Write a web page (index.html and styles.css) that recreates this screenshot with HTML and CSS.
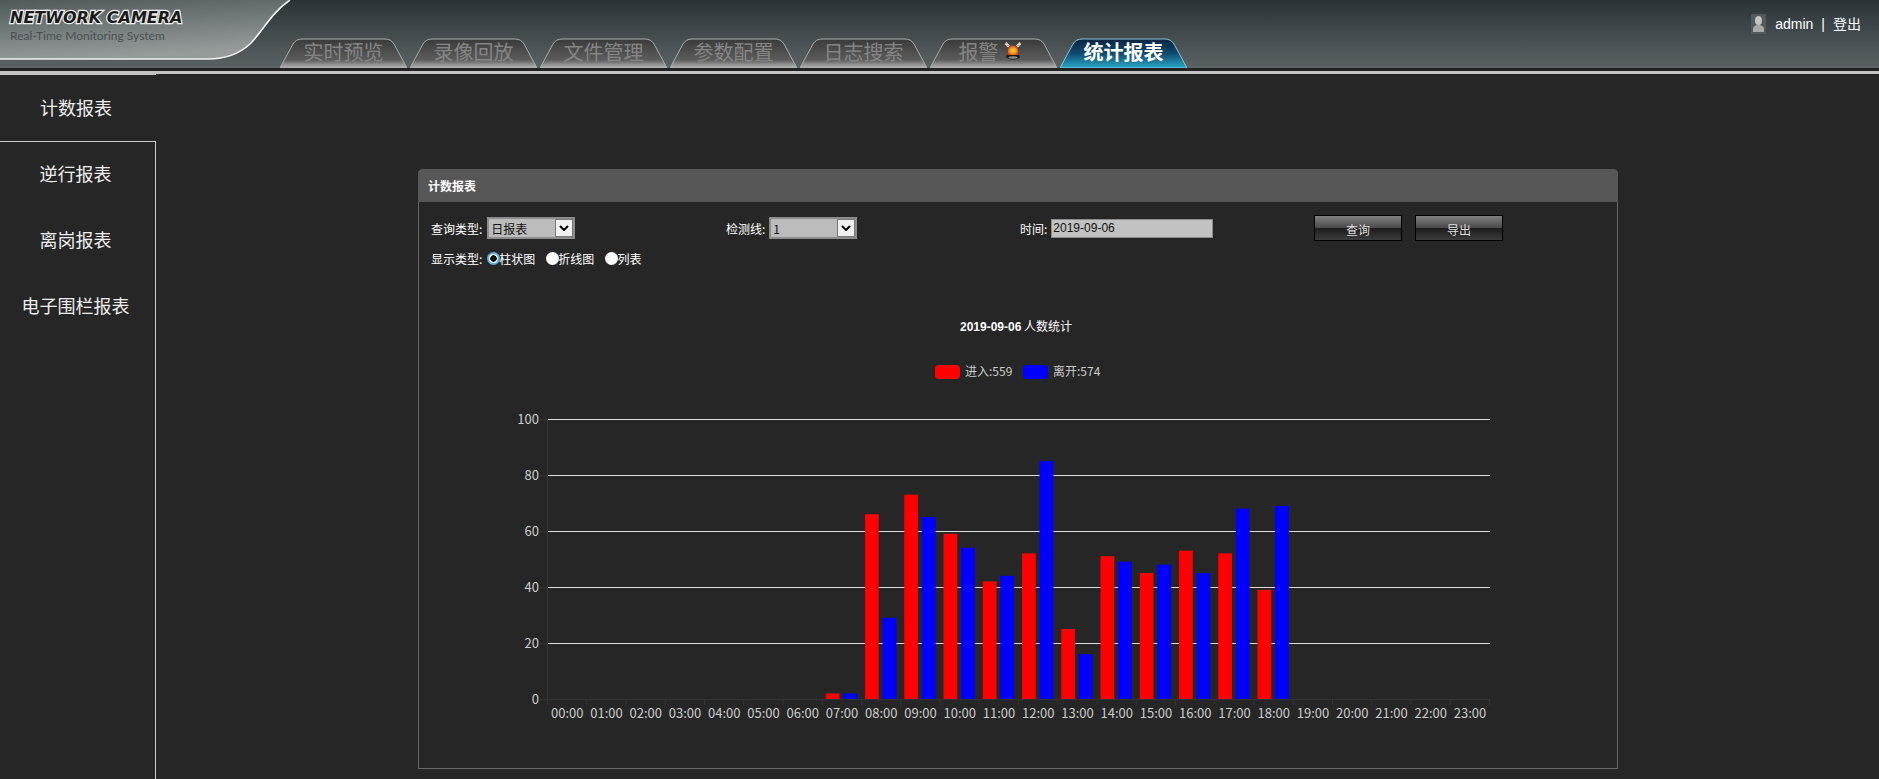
FILE: index.html
```html
<!DOCTYPE html>
<html lang="zh-CN">
<head>
    <meta charset="UTF-8">
    <meta name="viewport" content="width=device-width, initial-scale=1.0">
    <title>Network Camera</title>
    <link rel="stylesheet" href="styles.css">
</head>
<body>
    <div class="header">
        <svg class="logo-bg" width="300" height="68" viewBox="0 0 300 68">
            <defs>
                <linearGradient id="logoGrad" x1="0" y1="0" x2="0.3" y2="1">
                    <stop offset="0" stop-color="#50585a"/>
                    <stop offset="1" stop-color="#969c9a"/>
                </linearGradient>
            </defs>
            <path d="M0 0H290C272 12 262 32 250 44C238 55 224 59 208 59H0Z" fill="url(#logoGrad)"/>
            <path d="M0 59H208C224 59 238 55 250 44C262 32 272 12 290 0" fill="none" stroke="#f2f2f2" stroke-width="1.6"/>
        </svg>
        <div class="logo">
            <div class="logo-title">NETWORK CAMERA</div>
            <div class="logo-sub">Real-Time Monitoring System</div>
        </div>

        <svg width="0" height="0" class="defs">
            <defs>
                <linearGradient id="tabGrad" x1="0" y1="0" x2="0" y2="1">
                    <stop offset="0" stop-color="#3a3a3a"/>
                    <stop offset="0.72" stop-color="#5c5c5c"/>
                    <stop offset="1" stop-color="#b8b8b8"/>
                </linearGradient>
                <linearGradient id="tabActiveGrad" x1="0" y1="0" x2="0" y2="1">
                    <stop offset="0" stop-color="#0b2440"/>
                    <stop offset="0.5" stop-color="#0f4a70"/>
                    <stop offset="1" stop-color="#2aa8c6"/>
                </linearGradient>
                <radialGradient id="alarmGrad" cx="0.5" cy="0.55" r="0.55">
                    <stop offset="0" stop-color="#ffd83a"/>
                    <stop offset="0.55" stop-color="#ff9a1e"/>
                    <stop offset="1" stop-color="#e8380e"/>
                </radialGradient>
                <path id="tabShape" d="M0 30L13 6Q16 1 22 1H105Q111 1 114 6L127 30Z"/>
            </defs>
        </svg>

        <div class="tabs">
            <div class="tab">
                <svg class="tab-bg" width="127" height="30"><use href="#tabShape" fill="url(#tabGrad)" stroke="#a9adad"/></svg>
                <span>实时预览</span>
            </div>
            <div class="tab">
                <svg class="tab-bg" width="127" height="30"><use href="#tabShape" fill="url(#tabGrad)" stroke="#a9adad"/></svg>
                <span>录像回放</span>
            </div>
            <div class="tab">
                <svg class="tab-bg" width="127" height="30"><use href="#tabShape" fill="url(#tabGrad)" stroke="#a9adad"/></svg>
                <span>文件管理</span>
            </div>
            <div class="tab">
                <svg class="tab-bg" width="127" height="30"><use href="#tabShape" fill="url(#tabGrad)" stroke="#a9adad"/></svg>
                <span>参数配置</span>
            </div>
            <div class="tab">
                <svg class="tab-bg" width="127" height="30"><use href="#tabShape" fill="url(#tabGrad)" stroke="#a9adad"/></svg>
                <span>日志搜索</span>
            </div>
            <div class="tab tab-alarm">
                <svg class="tab-bg" width="127" height="30"><use href="#tabShape" fill="url(#tabGrad)" stroke="#a9adad"/></svg>
                <span>报警</span>
                <svg class="alarm" width="18" height="18" viewBox="0 0 18 18">
                    <path d="M1.5 1L5 4.5M16.5 1L13 4.5" stroke="#f0ddd0" stroke-width="2.6" fill="none"/>
                    <path d="M1.5 1L5 4.5M16.5 1L13 4.5" stroke="#5a3a30" stroke-width="1" stroke-dasharray="1 2" fill="none"/>
                    <ellipse cx="9" cy="14.5" rx="7" ry="3" fill="#1c1c1c"/>
                    <ellipse cx="9" cy="15.5" rx="4.5" ry="1.2" fill="#8a8a8a"/>
                    <path d="M4 13V8.5a5 5 0 0 1 10 0V13Z" fill="url(#alarmGrad)"/>
                </svg>
            </div>
            <div class="tab tab-active">
                <svg class="tab-bg" width="127" height="30"><use href="#tabShape" fill="url(#tabActiveGrad)" stroke="#8fc4d6"/></svg>
                <span>统计报表</span>
            </div>
        </div>

        <div class="user">
            <svg class="user-icon" width="15" height="20" viewBox="0 0 15 20">
                <rect width="15" height="20" fill="#53585a"/>
                <ellipse cx="7.5" cy="6.5" rx="3.5" ry="4.5" fill="#c4c4c4"/>
                <path d="M2 18V15Q2 12 6 11H9Q13 12 13 15V18Z" fill="#a8a8a8"/>
            </svg>
            <span>admin</span>
            <span class="user-sep">|</span>
            <span>登出</span>
        </div>
    </div>
    <div class="header-line"></div>

    <div class="main">
        <div class="sidebar">
            <div class="side-item side-active">计数报表</div>
            <div class="side-item">逆行报表</div>
            <div class="side-item">离岗报表</div>
            <div class="side-item">电子围栏报表</div>
        </div>

        <div class="content">
            <div class="panel">
                <div class="panel-title">计数报表</div>
                <div class="form-row">
                    <div class="field">
                        <label>查询类型:</label>
                        <div class="select"><span>日报表</span><i class="select-arrow"><svg width="10" height="6" viewBox="0 0 10 6"><path d="M1 1L5 5L9 1" fill="none" stroke="#000" stroke-width="2"/></svg></i></div>
                    </div>
                    <div class="field field-line">
                        <label>检测线:</label>
                        <div class="select"><span>1</span><i class="select-arrow"><svg width="10" height="6" viewBox="0 0 10 6"><path d="M1 1L5 5L9 1" fill="none" stroke="#000" stroke-width="2"/></svg></i></div>
                    </div>
                    <div class="field field-date">
                        <label>时间:</label>
                        <input class="date-input" type="text" value="2019-09-06">
                    </div>
                    <div class="field field-buttons">
                        <button>查询</button>
                        <button>导出</button>
                    </div>
                </div>
                <div class="form-row form-row-radio">
                    <label class="radio-title">显示类型:</label>
                    <label class="radio"><input type="radio" name="show" checked>柱状图</label>
                    <label class="radio"><input type="radio" name="show">折线图</label>
                    <label class="radio"><input type="radio" name="show">列表</label>
                </div>

                <!-- viewBox uses page coordinates, so numbers read the same as the screenshot -->
                <svg class="chart" width="1197" height="480" viewBox="419 280 1197 480">
                    <text class="chart-title" x="1016" y="331" text-anchor="middle"><tspan class="chart-date">2019-09-06</tspan> 人数统计</text>

                    <rect x="935" y="365" width="25" height="14" rx="4" fill="#f00"/>
                    <text class="chart-label legend-text" x="965" y="376">进入:559</text>
                    <rect x="1023" y="365" width="25" height="14" rx="4" fill="#00f"/>
                    <text class="chart-label legend-text" x="1053" y="376">离开:574</text>

                    <g class="grid">
                        <line x1="547.6" x2="1490" y1="419.5" y2="419.5"/>
                        <line x1="547.6" x2="1490" y1="475.5" y2="475.5"/>
                        <line x1="547.6" x2="1490" y1="531.5" y2="531.5"/>
                        <line x1="547.6" x2="1490" y1="587.5" y2="587.5"/>
                        <line x1="547.6" x2="1490" y1="643.5" y2="643.5"/>
                    </g>
                    <g class="axis">
                        <line x1="547.5" x2="547.5" y1="419.5" y2="699.5"/>
                        <line x1="547.6" x2="1490" y1="699.5" y2="699.5"/>
                        <line x1="540" x2="547" y1="419.5" y2="419.5"/>
                        <line x1="540" x2="547" y1="475.5" y2="475.5"/>
                        <line x1="540" x2="547" y1="531.5" y2="531.5"/>
                        <line x1="540" x2="547" y1="587.5" y2="587.5"/>
                        <line x1="540" x2="547" y1="643.5" y2="643.5"/>
                        <line x1="540" x2="547" y1="699.5" y2="699.5"/>
                        <line class="ticks" x1="547" x2="1491" y1="702.5" y2="702.5"/>
                    </g>

                    <g class="chart-label" text-anchor="end">
                        <text x="539" y="424">100</text>
                        <text x="539" y="480">80</text>
                        <text x="539" y="536">60</text>
                        <text x="539" y="592">40</text>
                        <text x="539" y="648">20</text>
                        <text x="539" y="704">0</text>
                    </g>

                    <g transform="translate(547.6 699) scale(1 -2.8)" fill="#f00">
                        <rect x="278.15" width="13.8" height="2"/>
                        <rect x="317.4" width="13.8" height="66"/>
                        <rect x="356.65" width="13.8" height="73"/>
                        <rect x="395.9" width="13.8" height="59"/>
                        <rect x="435.15" width="13.8" height="42"/>
                        <rect x="474.4" width="13.8" height="52"/>
                        <rect x="513.65" width="13.8" height="25"/>
                        <rect x="552.9" width="13.8" height="51"/>
                        <rect x="592.15" width="13.8" height="45"/>
                        <rect x="631.4" width="13.8" height="53"/>
                        <rect x="670.65" width="13.8" height="52"/>
                        <rect x="709.9" width="13.8" height="39"/>
                    </g>
                    <g transform="translate(547.6 699) scale(1 -2.8)" fill="#00f">
                        <rect x="295.75" width="13.8" height="2"/>
                        <rect x="335" width="13.8" height="29"/>
                        <rect x="374.25" width="13.8" height="65"/>
                        <rect x="413.5" width="13.8" height="54"/>
                        <rect x="452.75" width="13.8" height="44"/>
                        <rect x="492" width="13.8" height="85"/>
                        <rect x="531.25" width="13.8" height="16"/>
                        <rect x="570.5" width="13.8" height="49"/>
                        <rect x="609.75" width="13.8" height="48"/>
                        <rect x="649" width="13.8" height="45"/>
                        <rect x="688.25" width="13.8" height="68"/>
                        <rect x="727.5" width="13.8" height="69"/>
                    </g>

                    <g class="chart-label" text-anchor="middle">
                        <text x="567.2" y="718">00:00</text>
                        <text x="606.5" y="718">01:00</text>
                        <text x="645.7" y="718">02:00</text>
                        <text x="685" y="718">03:00</text>
                        <text x="724.2" y="718">04:00</text>
                        <text x="763.5" y="718">05:00</text>
                        <text x="802.7" y="718">06:00</text>
                        <text x="842" y="718">07:00</text>
                        <text x="881.2" y="718">08:00</text>
                        <text x="920.5" y="718">09:00</text>
                        <text x="959.7" y="718">10:00</text>
                        <text x="999" y="718">11:00</text>
                        <text x="1038.2" y="718">12:00</text>
                        <text x="1077.5" y="718">13:00</text>
                        <text x="1116.7" y="718">14:00</text>
                        <text x="1156" y="718">15:00</text>
                        <text x="1195.2" y="718">16:00</text>
                        <text x="1234.5" y="718">17:00</text>
                        <text x="1273.7" y="718">18:00</text>
                        <text x="1313" y="718">19:00</text>
                        <text x="1352.2" y="718">20:00</text>
                        <text x="1391.5" y="718">21:00</text>
                        <text x="1430.7" y="718">22:00</text>
                        <text x="1470" y="718">23:00</text>
                    </g>
                </svg>
            </div>
        </div>
    </div>
</body>
</html>
```

FILE: styles.css
```css
* {
    box-sizing: border-box;
}
html, body {
    height: 100%;
}
body {
    margin: 0;
    overflow: hidden;
    display: flex;
    flex-direction: column;
    background-color: #262626;
    color: #fff;
    font-family: "Noto Sans CJK SC", "Liberation Sans", sans-serif;
    font-size: 12px;
}

/* header */
.header {
    position: relative;
    flex: none;
    height: 71px;
    border-bottom: 3px solid #222;
    background: linear-gradient(#293336, #5b6264);
}
.logo-bg {
    position: absolute;
    top: 0;
    left: 0;
}
.defs {
    position: absolute;
}
.logo {
    position: absolute;
    top: 8px;
    left: 10px;
}
.logo-title {
    font-family: "DejaVu Sans", sans-serif;
    font-size: 16px;
    font-weight: bold;
    font-style: italic;
    line-height: 20px;
    color: #1a1a1a;
    -webkit-text-stroke: 2.4px #f0f0f0;
    paint-order: stroke fill;
}
.logo-sub {
    font-family: "Lato", sans-serif;
    font-size: 12px;
    line-height: 16px;
    color: #4a5052;
}
.tabs {
    position: absolute;
    left: 280px;
    top: 38px;
    display: flex;
    gap: 3px;
}
.tab {
    position: relative;
    width: 127px;
    height: 30px;
    padding-bottom: 4px;
    display: flex;
    justify-content: center;
    align-items: center;
    gap: 5px;
    font-size: 20px;
    color: #858585;
}
.tab span, .alarm {
    position: relative;
}
.tab-alarm {
    padding-right: 7px;
}
.tab-bg {
    position: absolute;
    top: 0;
    left: 0;
}
.tab-active {
    color: #fff;
    font-weight: bold;
}
.user {
    position: absolute;
    top: 14px;
    right: 18px;
    display: flex;
    align-items: center;
    font-family: "Liberation Sans", "Noto Sans CJK SC", sans-serif;
    font-size: 14px;
    line-height: 20px;
}
.user-icon {
    margin-right: 9px;
}
.user-sep {
    margin: 0 8px;
}
.header-line {
    flex: none;
    height: 3px;
    background-color: #c4c4c4;
}

/* main */
.main {
    flex: 1;
    display: flex;
    min-height: 0;
}
.sidebar {
    flex: none;
    width: 156px;
    border-right: 1px solid #ccc;
}
.side-item {
    height: 66px;
    padding: 0 4px 4px 0;
    display: flex;
    justify-content: center;
    align-items: center;
    font-size: 18px;
    color: #eee;
}
.side-active {
    height: 68px;
    margin-right: -1px;
    padding-bottom: 2px;
    border-top: 1px solid #c4c4c4;
    border-bottom: 1px solid #ccc;
    background-color: #262626;
    position: relative;
}
.content {
    flex: 1;
    padding: 95px 0 0 262px;
}
.panel {
    width: 1200px;
    height: 600px;
    border: 1px solid #666;
    border-top: none;
    border-radius: 5px 5px 0 0;
}
.panel-title {
    height: 33px;
    margin: 0 -1px;
    padding-left: 10px;
    border-radius: 5px 5px 0 0;
    background-color: #575757;
    font-weight: bold;
    line-height: 33px;
}

/* form */
.form-row {
    display: grid;
    grid-template-columns: repeat(4, 295px);
    padding-left: 12px;
    margin-top: 12px;
    height: 28px;
    align-items: center;
}
.field {
    display: flex;
    align-items: center;
    gap: 5px;
}
.field-line {
    gap: 4px;
}
.field-date {
    gap: 4px;
    margin-left: -1px;
}
.field-buttons {
    gap: 13px;
    margin-left: -2px;
}
.select {
    width: 88px;
    height: 22px;
    display: flex;
    justify-content: space-between;
    align-items: center;
    border: 2px solid #8c8c8c;
    background-color: #bcbcbc;
    color: #111;
    padding-left: 2px;
}
.select-arrow {
    width: 18px;
    height: 18px;
    display: flex;
    justify-content: center;
    align-items: center;
    border: 1px solid #777;
    background-color: #f0f0f0;
}
.date-input {
    width: 162px;
    height: 19px;
    border: 1px solid #8c8c8c;
    padding: 0 1px;
    background-color: #c2c2c2;
    color: #111;
    font-family: "Liberation Sans", sans-serif;
    font-size: 12px;
}
button {
    width: 88px;
    height: 26px;
    padding: 3px 0 0;
    border: 1px solid #000;
    background: linear-gradient(#808080, #4a4a4a 49%, #1c1c1c 50%, #3c3c3c);
    color: #ddd;
    font-family: inherit;
    font-size: 12px;
}
.form-row-radio {
    display: flex;
    margin-top: 6px;
    height: 20px;
    gap: 3px;
}
.radio-title {
    margin-right: 2px;
}
.radio {
    display: flex;
    align-items: center;
    margin-right: 8px;
}
.radio input {
    appearance: none;
    width: 13px;
    height: 13px;
    margin: 0 -1px 0 0;
    border-radius: 50%;
    background-color: #fff;
}
.radio input:checked {
    border: 2px solid #5db3e6;
    background: radial-gradient(circle, #111 0 3px, #fff 3.5px);
}

/* chart */
.chart {
    display: block;
    margin-top: 12px;
}
.chart text {
    font-size: 13px;
}
.chart .chart-title, .chart .legend-text {
    font-size: 12px;
}
.chart-title {
    fill: #fff;
}
.chart-date {
    font-family: "Liberation Sans", sans-serif;
    font-weight: bold;
}
.chart-label, .chart-label text {
    fill: #ccc;
}
.grid line {
    stroke: #ddd;
    stroke-width: 1;
}
.axis line {
    stroke: #333;
    stroke-width: 1;
}
.axis .ticks {
    stroke-width: 5;
    stroke-dasharray: 1 38.25;
}
```
